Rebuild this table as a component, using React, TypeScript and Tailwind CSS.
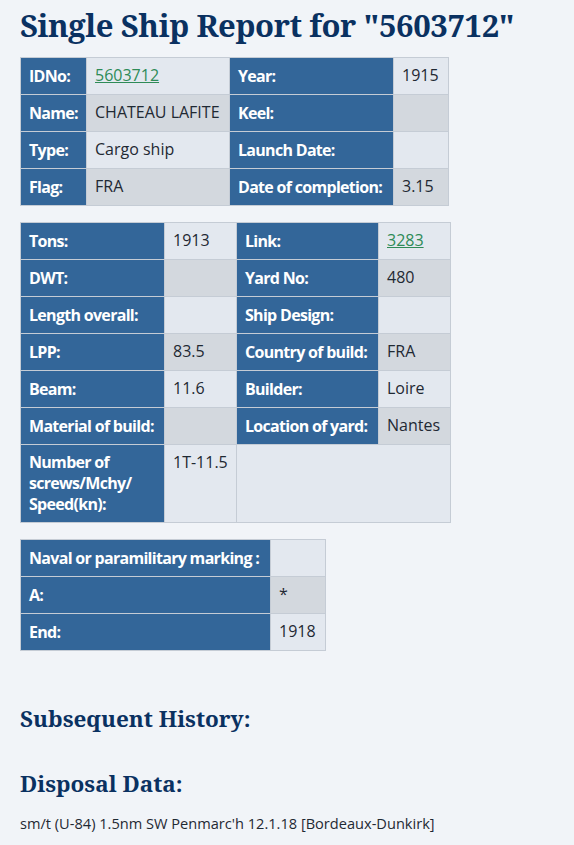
import React from 'react';

type Cell = { text?: string; link?: boolean; label?: boolean; colSpan?: number };

const shipRows: Cell[][] = [
  [{ text: 'IDNo:', label: true }, { text: '5603712', link: true }, { text: 'Year:', label: true }, { text: '1915' }],
  [{ text: 'Name:', label: true }, { text: 'CHATEAU LAFITE' }, { text: 'Keel:', label: true }, {}],
  [{ text: 'Type:', label: true }, { text: 'Cargo ship' }, { text: 'Launch Date:', label: true }, {}],
  [{ text: 'Flag:', label: true }, { text: 'FRA' }, { text: 'Date of completion:', label: true }, { text: '3.15' }],
];

const specRows: Cell[][] = [
  [{ text: 'Tons:', label: true }, { text: '1913' }, { text: 'Link:', label: true }, { text: '3283', link: true }],
  [{ text: 'DWT:', label: true }, {}, { text: 'Yard No:', label: true }, { text: '480' }],
  [{ text: 'Length overall:', label: true }, {}, { text: 'Ship Design:', label: true }, {}],
  [{ text: 'LPP:', label: true }, { text: '83.5' }, { text: 'Country of build:', label: true }, { text: 'FRA' }],
  [{ text: 'Beam:', label: true }, { text: '11.6' }, { text: 'Builder:', label: true }, { text: 'Loire' }],
  [{ text: 'Material of build:', label: true }, {}, { text: 'Location of yard:', label: true }, { text: 'Nantes' }],
  [{ text: 'Number of screws/Mchy/ Speed(kn):', label: true }, { text: '1T-11.5' }, { colSpan: 2 }],
];

const markRows: Cell[][] = [
  [{ text: 'Naval or paramilitary marking :', label: true }, {}],
  [{ text: 'A:', label: true }, { text: '*' }],
  [{ text: 'End:', label: true }, { text: '1918' }],
];

function InfoTable({ rows, widths }: { rows: Cell[][]; widths: number[] }) {
  return (
    <table className="border-collapse table-fixed border border-[#c5ccd5]" style={{ width: widths.reduce((a, b) => a + b, 0) }}>
      <colgroup>
        {widths.map((w, i) => (
          <col key={i} style={{ width: w }} />
        ))}
      </colgroup>
      <tbody>
        {rows.map((row, r) => (
          <tr key={r} className={r % 2 === 0 ? 'bg-[#e3e8ef]' : 'bg-[#d3d8de]'}>
            {row.map((c, i) =>
              c.label ? (
                <td
                  key={i}
                  className="bg-[#336699] text-white font-bold tracking-[-0.7px] border border-[#c5ccd5] pl-2 pr-1 py-[7px] h-[37px] align-middle leading-[21px]"
                >
                  {c.text}
                </td>
              ) : (
                <td
                  key={i}
                  colSpan={c.colSpan}
                  className="border border-[#c5ccd5] px-2 py-[6px] h-[37px] align-top text-[#1f2933] leading-[23px] whitespace-nowrap"
                >
                  {c.link ? <a className="text-[#2e8b57] underline">{c.text}</a> : c.text}
                </td>
              )
            )}
          </tr>
        ))}
      </tbody>
    </table>
  );
}

export default function App() {
  return (
    <div className="min-h-[845px] bg-[#f1f4f8] px-5 text-[16px] font-['Open_Sans',sans-serif]">
      <h1 className="pt-[2px] text-[31px] leading-[46px] font-bold text-[#0a3161] font-['Noto_Serif','DejaVu_Serif',serif] tracking-[-0.4px]">
        Single Ship Report for "5603712"
      </h1>
      <div className="mt-[9px]">
        <InfoTable rows={shipRows} widths={[66, 143, 164, 55]} />
      </div>
      <div className="mt-4">
        <InfoTable rows={specRows} widths={[144, 72, 142, 72]} />
      </div>
      <div className="mt-4">
        <InfoTable rows={markRows} widths={[250, 55]} />
      </div>
      <h2 className="mt-[52px] text-[22.5px] leading-[32px] font-bold text-[#0a3161] font-['Noto_Serif','DejaVu_Serif',serif]">
        Subsequent History:
      </h2>
      <h2 className="mt-[33px] text-[22.5px] leading-[32px] font-bold text-[#0a3161] font-['Noto_Serif','DejaVu_Serif',serif]">
        Disposal Data:
      </h2>
      <p className="mt-[13px] text-[14.6px] text-[#1f2933]">sm/t (U-84) 1.5nm SW Penmarc'h 12.1.18 [Bordeaux-Dunkirk]</p>
    </div>
  );
}
